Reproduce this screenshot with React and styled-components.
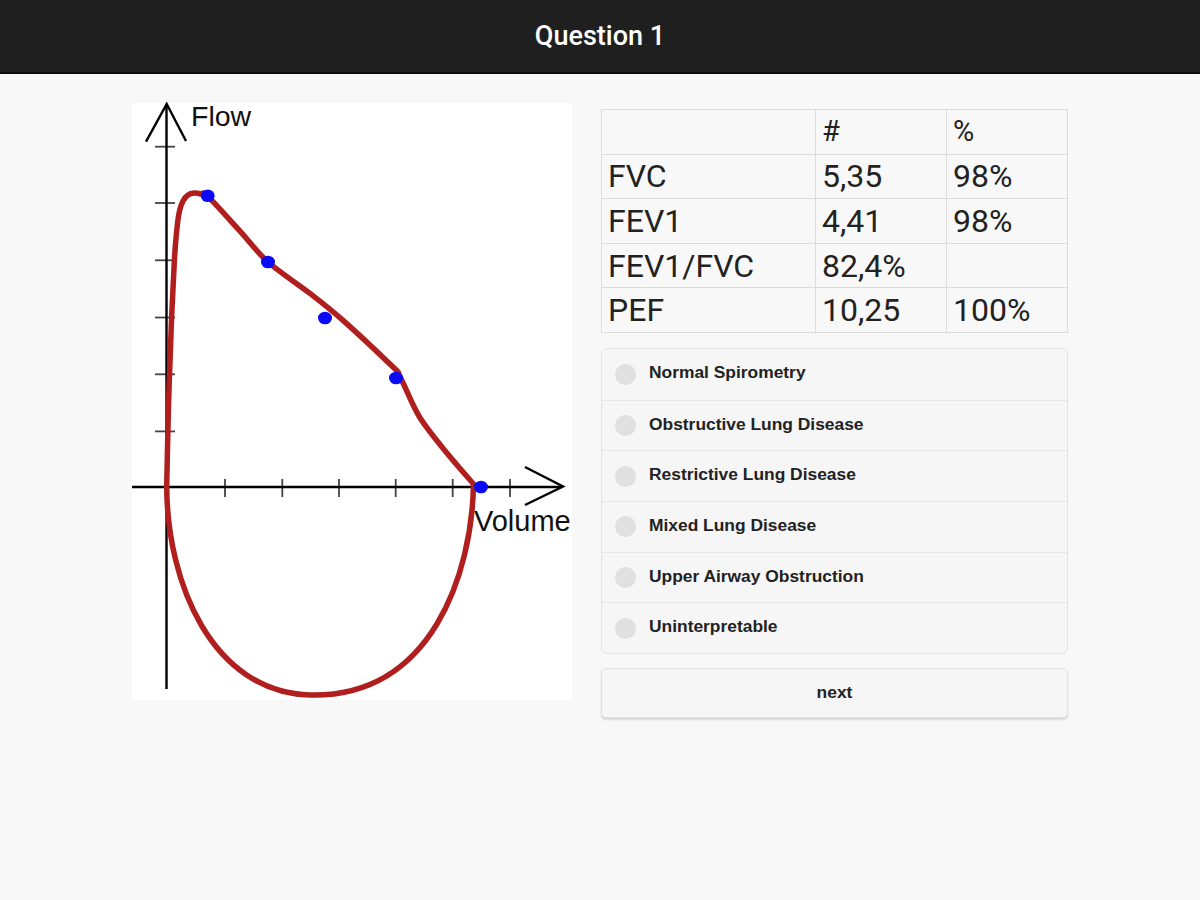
import React from "react";
import styled, { createGlobalStyle } from "styled-components";

const Global = createGlobalStyle`
  html, body { margin: 0; padding: 0; background: #f8f8f8; }
  * { box-sizing: border-box; }
`;

const Page = styled.div`
  width: 1200px;
  min-height: 900px;
  background: #f8f8f8;
`;

const Header = styled.header`
  height: 74px;
  background: #1f1f1f;
  border-bottom: 2px solid #0c0c0c;
  display: flex;
  align-items: center;
  justify-content: center;
  color: #fff;
  font-family: Roboto, "Noto Sans", sans-serif;
  font-weight: 500;
  font-size: 27px;
  padding-bottom: 1px;
`;

const Main = styled.main`
  display: flex;
  justify-content: center;
  gap: 29px;
  padding-top: 29px;
`;

const ChartPanel = styled.div`
  width: 440px;
  height: 597px;
  background: #fff;
  flex: none;

  svg {
    display: block;
    overflow: visible;
  }
`;

const RightCol = styled.div`
  width: 467px;
  padding-top: 6px;
  display: flex;
  flex-direction: column;
`;

const Table = styled.div`
  display: grid;
  grid-template-columns: 214px 131px 1fr;
  grid-auto-rows: 44.6px;
  border-top: 1px solid #dcdcdc;
  border-left: 1px solid #dcdcdc;
  font-family: Roboto, "Noto Sans", sans-serif;
  color: #222;
`;

const Cell = styled.div`
  border-right: 1px solid #dcdcdc;
  border-bottom: 1px solid #dcdcdc;
  display: flex;
  align-items: center;
  padding-left: 6px;
  font-size: ${(p) => (p.$head ? "29px" : "32px")};
  line-height: 1;
`;

const Options = styled.div`
  margin-top: 15px;
  border: 1px solid #e3e3e3;
  border-radius: 6px;
  background: #f6f6f6;
  overflow: hidden;
`;

const Option = styled.label`
  display: flex;
  align-items: center;
  height: 50.7px;
  padding: 0 0 3px 13px;
  gap: 13px;
  border-top: ${(p) => (p.$first ? "none" : "1px solid #e6e6e6")};
  font-family: "Liberation Sans", Arial, sans-serif;
  font-weight: 700;
  font-size: 17.4px;
  color: #222;
  cursor: pointer;
`;

const Radio = styled.span`
  width: 21px;
  height: 21px;
  margin-top: 3px;
  border-radius: 50%;
  background: #e0e0e0;
  flex: none;
`;

const NextButton = styled.button`
  margin-top: 14px;
  height: 50px;
  width: 100%;
  padding-bottom: 3px;
  border: 1px solid #e0e0e0;
  border-radius: 5px;
  background: #f6f6f6;
  box-shadow: 0 2px 2px rgba(0, 0, 0, 0.13);
  font-family: "Liberation Sans", Arial, sans-serif;
  font-weight: 700;
  font-size: 17.4px;
  color: #222;
  cursor: pointer;
`;

function crPath(pts, move = true) {
  let d = move ? `M${pts[0][0]},${pts[0][1]}` : "";
  for (let i = 0; i < pts.length - 1; i++) {
    const p0 = pts[i - 1] || pts[i];
    const p1 = pts[i];
    const p2 = pts[i + 1];
    const p3 = pts[i + 2] || p2;
    const c1 = [p1[0] + (p2[0] - p0[0]) / 6, p1[1] + (p2[1] - p0[1]) / 6];
    const c2 = [p2[0] - (p3[0] - p1[0]) / 6, p2[1] - (p3[1] - p1[1]) / 6];
    d += ` C${c1[0].toFixed(1)},${c1[1].toFixed(1)} ${c2[0].toFixed(1)},${c2[1].toFixed(1)} ${p2[0]},${p2[1]}`;
  }
  return d;
}

const expiratory = [
  [34.7, 383], [36.5, 303], [39.2, 225], [42.5, 155], [45, 125],
  [47.5, 108], [51, 98], [56, 92], [62, 90], [69, 91],
  [76, 93.5], [108, 128.1], [136, 159], [178, 190.4], [211.3, 217.6],
  [261.3, 264.3], [266.5, 271], [272, 282], [288, 314.8],
  [314.7, 349.8], [341.5, 381],
];

const loopPath =
  crPath(expiratory) +
  " C340,470 300,595 178,592 C80,589 35,480 34.7,383";

const yTicks = [43.7, 100, 157.3, 214.5, 271.3, 328.4];
const xTicks = [93, 150.3, 207, 263.7, 320.7, 378];
const dots = [
  [75.7, 92.7], [136, 159], [193, 215], [264, 275], [349, 384],
];

function FlowVolumeChart() {
  return (
    <svg width="440" height="597" viewBox="0 0 440 597">
      {yTicks.map((y) => (
        <line key={y} x1="23" x2="43" y1={y} y2={y} stroke="#444" strokeWidth="1.8" />
      ))}
      {xTicks.map((x) => (
        <line key={x} x1={x} x2={x} y1="376" y2="394" stroke="#444" strokeWidth="1.8" />
      ))}
      <line x1="34.5" y1="2" x2="34.5" y2="586" stroke="#000" strokeWidth="2.4" />
      <polyline points="14,38.7 34.7,1 54,38" fill="none" stroke="#000" strokeWidth="2.4" />
      <line x1="0" y1="384" x2="430" y2="384" stroke="#000" strokeWidth="2.4" />
      <polyline points="393,364 431,383.5 393,402" fill="none" stroke="#000" strokeWidth="2.4" />
      <text x="59" y="22.5" fontFamily="Liberation Sans, Arial, sans-serif" fontSize="28.5" fill="#111">
        Flow
      </text>
      <text x="342" y="428" fontFamily="Liberation Sans, Arial, sans-serif" fontSize="29" fill="#111">
        Volume
      </text>
      <path
        d={loopPath}
        fill="none"
        stroke="#b01e1e"
        strokeWidth="5.5"
        strokeLinejoin="round"
        strokeLinecap="round"
      />
      {dots.map(([x, y]) => (
        <ellipse key={x} cx={x} cy={y} rx="7" ry="6.3" fill="#0a0af5" />
      ))}
    </svg>
  );
}

const rows = [
  ["", "#", "%"],
  ["FVC", "5,35", "98%"],
  ["FEV1", "4,41", "98%"],
  ["FEV1/FVC", "82,4%", ""],
  ["PEF", "10,25", "100%"],
];

const options = [
  "Normal Spirometry",
  "Obstructive Lung Disease",
  "Restrictive Lung Disease",
  "Mixed Lung Disease",
  "Upper Airway Obstruction",
  "Uninterpretable",
];

export default function App() {
  return (
    <Page>
      <Global />
      <Header>Question 1</Header>
      <Main>
        <ChartPanel>
          <FlowVolumeChart />
        </ChartPanel>
        <RightCol>
          <Table>
            {rows.map((r, ri) =>
              r.map((c, ci) => (
                <Cell key={`${ri}-${ci}`} $head={ri === 0}>
                  {c}
                </Cell>
              ))
            )}
          </Table>
          <Options>
            {options.map((o, i) => (
              <Option key={o} $first={i === 0}>
                <Radio />
                {o}
              </Option>
            ))}
          </Options>
          <NextButton>next</NextButton>
        </RightCol>
      </Main>
    </Page>
  );
}
